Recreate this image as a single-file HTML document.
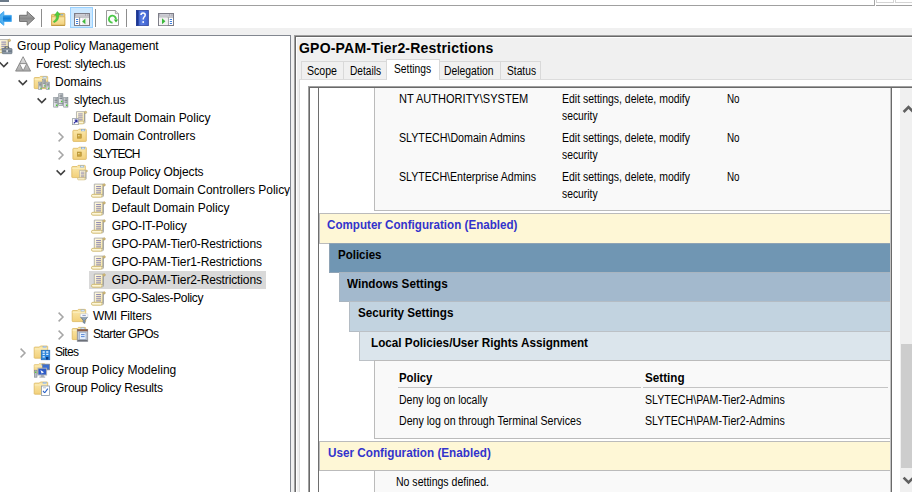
<!DOCTYPE html>
<html>
<head>
<meta charset="utf-8">
<title>Group Policy Management</title>
<style>
html,body{margin:0;padding:0;}
body{width:912px;height:492px;overflow:hidden;background:#fff;position:relative;font-family:"Liberation Sans",sans-serif;}
.a{position:absolute;}
.t{position:absolute;white-space:pre;line-height:1;transform-origin:0 0;font-family:"Liberation Sans",sans-serif;color:#000;}
svg{position:absolute;overflow:visible;}
</style>
</head>
<body>
<!-- top strip -->
<div class="a" style="left:0;top:0;width:9px;height:2px;background:#6b7a89"></div>
<div class="a" style="left:0;top:5px;width:875px;height:1px;background:#a0a0a0"></div>
<div class="a" style="left:876px;top:5px;width:36px;height:1px;background:#a0a0a0"></div>
<div class="a" style="left:874px;top:0;width:1px;height:6px;background:#a6a6a6"></div>
<div class="a" style="left:876px;top:0;width:18px;height:3px;border:1px solid #d4d4d4;border-top:none;box-sizing:border-box"></div>
<div class="a" style="left:895px;top:0;width:19px;height:3px;border:1px solid #d4d4d4;border-top:none;box-sizing:border-box"></div>
<!-- toolbar bottom strip -->
<div class="a" style="left:0;top:28px;width:912px;height:7px;background:#f0f0f0"></div>
<!-- left pane -->
<div class="a" style="left:0;top:35px;width:290px;height:460px;background:#fff;border-top:1px solid #828790;border-right:1px solid #828790"></div>
<!-- splitter gap -->
<div class="a" style="left:291px;top:35px;width:3px;height:460px;background:#f0f0f0"></div>
<!-- right pane -->
<div class="a" style="left:294px;top:35px;width:620px;height:460px;background:#f0f0f0;border-left:1px solid #a0a0a0;border-top:1px solid #a0a0a0;box-sizing:border-box"></div>
<div class="a" style="left:295px;top:36px;width:620px;height:460px;border-left:1px solid #696969;border-top:1px solid #696969;box-sizing:border-box"></div>
<div class="a" style="left:296px;top:37px;width:620px;height:460px;border-left:1px solid #fff;border-top:1px solid #fff;box-sizing:border-box"></div>

<!-- tab page -->
<div class="a" style="left:299px;top:79px;width:620px;height:420px;background:#fff;border-left:1px solid #dcdcdc;border-top:1px solid #dcdcdc;box-sizing:border-box"></div>
<!-- tabs -->
<div class="a" style="left:301px;top:61px;width:240px;height:18px;border:1px solid #d9d9d9;border-bottom:none;box-sizing:border-box;background:#f0f0f0"></div>
<div class="a" style="left:343px;top:61px;width:1px;height:18px;background:#d9d9d9"></div>
<div class="a" style="left:500px;top:61px;width:1px;height:18px;background:#d9d9d9"></div>
<div class="a" style="left:386px;top:59px;width:54px;height:21px;border:1px solid #d9d9d9;border-bottom:none;box-sizing:border-box;background:#fff"></div>

<!-- browser control (sunken border) -->
<div class="a" style="left:308px;top:86px;width:610px;height:410px;background:#fff;border-left:1px solid #a0a0a0;border-top:1px solid #a0a0a0;box-sizing:border-box"></div>
<div class="a" style="left:309px;top:87px;width:610px;height:410px;border-left:1px solid #696969;border-top:1px solid #696969;box-sizing:border-box"></div>

<!-- report container side borders -->
<div class="a" style="left:318px;top:88px;width:1px;height:410px;background:#6e6e6e"></div>
<div class="a" style="left:891px;top:88px;width:1px;height:410px;background:#6a6a6a"></div>
<div class="a" style="left:890px;top:88px;width:1px;height:410px;background:#c2c2c2;z-index:3"></div>

<!-- scrollbar -->
<div class="a" style="left:900px;top:88px;width:17px;height:410px;background:#f0f0f0"></div>
<div class="a" style="left:901px;top:344px;width:15px;height:124px;background:#cdcdcd"></div>
<svg style="left:900px;top:88px" width="17" height="404"><path d="M3.6 24 L8.5 19.1 L13.4 24" fill="none" stroke="#606060" stroke-width="2.6"/><path d="M3.6 389.6 L8.5 394.5 L13.4 389.6" fill="none" stroke="#606060" stroke-width="2.6"/></svg>

<!-- section 1 container (delegation table) -->
<div class="a" style="left:374px;top:88px;width:517px;height:123px;background:#f9f9f9;border-left:1px solid #bbb;border-bottom:1px solid #bbb;box-sizing:border-box"></div>

<!-- Computer Configuration -->
<div class="a" style="left:319px;top:213px;width:572px;height:31px;background:#fef7d6;border:1px solid #bbb;box-sizing:border-box"></div>
<div class="a" style="left:329px;top:243px;width:562px;height:30px;background:#7096b3;border:1px solid #8ea3b5;border-right-color:#bbb;box-sizing:border-box"></div>
<div class="a" style="left:339px;top:272px;width:552px;height:30px;background:#a3b9cd;border:1px solid #a9b5c0;border-right-color:#bbb;box-sizing:border-box"></div>
<div class="a" style="left:349px;top:301px;width:542px;height:31px;background:#c2d3e0;border:1px solid #b4bcc4;border-right-color:#bbb;box-sizing:border-box"></div>
<div class="a" style="left:359px;top:331px;width:532px;height:30px;background:#dbe5ec;border:1px solid #bcc1c6;border-right-color:#bbb;box-sizing:border-box"></div>
<!-- policy container -->
<div class="a" style="left:374px;top:360px;width:517px;height:79px;background:#f9f9f9;border:1px solid #bbb;box-sizing:border-box"></div>
<div class="a" style="left:398px;top:387px;width:243px;height:1px;background:#c4c4c4"></div>
<div class="a" style="left:643px;top:387px;width:245px;height:1px;background:#c4c4c4"></div>

<!-- User Configuration -->
<div class="a" style="left:319px;top:441px;width:572px;height:30px;background:#fef7d6;border:1px solid #bbb;box-sizing:border-box"></div>
<div class="a" style="left:374px;top:470px;width:517px;height:30px;background:#f9f9f9;border:1px solid #bbb;box-sizing:border-box"></div>

<!-- tree selection -->
<div class="a" style="left:89px;top:271px;width:177px;height:18px;background:#d9d9d9"></div>

<svg width="0" height="0" style="position:absolute">
<defs>
<linearGradient id="gPaper" x1="0" y1="0" x2="1" y2="1"><stop offset="0" stop-color="#fffbea"/><stop offset="1" stop-color="#f6e4a0"/></linearGradient>
<linearGradient id="gFold" x1="0" y1="0" x2="0" y2="1"><stop offset="0" stop-color="#fbe9ad"/><stop offset="1" stop-color="#f2d07a"/></linearGradient>
<linearGradient id="gGray" x1="0" y1="0" x2="0" y2="1"><stop offset="0" stop-color="#e8e8e8"/><stop offset="1" stop-color="#a8a8a8"/></linearGradient>
<linearGradient id="gSrv" x1="0" y1="0" x2="1" y2="0"><stop offset="0" stop-color="#eceef0"/><stop offset="1" stop-color="#b4bbc1"/></linearGradient>
<linearGradient id="gBlueArrow" x1="0" y1="0" x2="0" y2="1"><stop offset="0" stop-color="#6cc4f8"/><stop offset="0.5" stop-color="#0a7ad6"/><stop offset="1" stop-color="#58b8f4"/></linearGradient>
<linearGradient id="gGrayArrow" x1="0" y1="0" x2="0" y2="1"><stop offset="0" stop-color="#bdbdbd"/><stop offset="0.5" stop-color="#8a8a8a"/><stop offset="1" stop-color="#b5b5b5"/></linearGradient>
<linearGradient id="gHelp" x1="0" y1="0" x2="1" y2="0"><stop offset="0" stop-color="#3050b8"/><stop offset="0.45" stop-color="#5a7ee4"/><stop offset="1" stop-color="#3c5ecc"/></linearGradient>
<!-- GPO scroll 16x16 -->
<g id="scroll">
  <path d="M3.3 1.1 H12.1 V11.6 H3.3 Z" fill="url(#gPaper)" stroke="#a2a29e" stroke-width="0.8"/>
  <path d="M12.2 2.6 V13.2" stroke="#8e8e8e" stroke-width="0.9"/>
  <circle cx="13.1" cy="1.9" r="1.2" fill="#dcc680" stroke="#ac9660" stroke-width="0.6"/>
  <path d="M10.9 11.4 L12.4 11.6 L12.2 13.6 L10.6 14.2 Z" fill="#e8e6de" stroke="#9a9a96" stroke-width="0.5"/>
  <rect x="0.5" y="11.3" width="10.6" height="2.9" rx="1.4" fill="#fdf6d8" stroke="#cdb566" stroke-width="0.9"/>
  <path d="M5.1 3.6H10M5.1 5.7H10M5.1 7.8H10M5.1 9.9H10" stroke="#8884b2" stroke-width="1"/>
</g>
<!-- plain folder, 16x16 ; body x0.5-13, y1.5-13 -->
<g id="folder">
  <path d="M0.2 3.2 Q0.2 2.5 0.9 2.5 H5.4 L6.4 1.4 H13 Q13.7 1.4 13.7 2.1 V13 Q13.7 13.6 13.1 13.6 H0.8 Q0.2 13.6 0.2 13 Z" fill="url(#gFold)" stroke="#dcb860" stroke-width="0.8"/>
  <rect x="9" y="1.9" width="3.2" height="1.2" fill="#fff" stroke="#6a9ee0" stroke-width="0.5"/>
  <path d="M0.6 4.4 H13.3" stroke="#fdf0c4" stroke-width="0.8"/>
</g>
<!-- OU -->
<g id="ou">
  <path d="M0.9 3 Q0.9 2.3 1.6 2.3 H6 L7 1.2 H13.6 Q14.3 1.2 14.3 1.9 V12.8 Q14.3 13.4 13.7 13.4 H1.5 Q0.9 13.4 0.9 12.8 Z" fill="url(#gFold)" stroke="#dcb860" stroke-width="0.8"/>
  <rect x="9.6" y="1.7" width="3.2" height="1.2" fill="#fff" stroke="#6a9ee0" stroke-width="0.5"/>
  <rect x="5.3" y="6" width="4" height="4.2" fill="#c9a23c" stroke="#a8842c" stroke-width="0.5"/>
  <rect x="6" y="7.2" width="1.6" height="1" fill="#f6e6a8"/>
</g>
<!-- server tower w=4.4,h=10 at 0,0 -->
<g id="tower">
  <rect x="0.3" y="0.3" width="4.2" height="9.6" fill="url(#gSrv)" stroke="#7c858c" stroke-width="0.6"/>
  <path d="M1 1.8H3.8M1 3.4H3.8M1 5H3.8" stroke="#5a6268" stroke-width="0.7"/>
  <rect x="2.6" y="7.4" width="1.4" height="1.4" fill="#4ad12a"/>
</g>
<g id="chevD"><path d="M-4.2 -2.2 L0 2 L4.2 -2.2" fill="none" stroke="#404040" stroke-width="1.5"/></g>
<g id="chevR"><path d="M-2.4 -4.4 L2 0 L-2.4 4.4" fill="none" stroke="#a6a6a6" stroke-width="1.5"/></g>
</defs>
</svg>

<!-- ===== toolbar ===== -->
<svg style="left:0;top:0" width="200" height="30">
  <!-- back arrow (blue), cropped at left -->
  <path d="M-4.5 18.4 L3.8 11.6 V15.4 H11.3 V21.5 H3.8 V25.3 Z" fill="url(#gBlueArrow)" stroke="#4aaaf0" stroke-width="1" stroke-linejoin="round"/>
  <path d="M-3.2 18.4 L3 13.4 V23.4 Z" fill="#62bcf6" opacity="0.75"/>
  <!-- forward arrow (gray) -->
  <path d="M34.6 18.3 L27.2 11.6 V15.3 H19.5 V21.4 H27.2 V25.2 Z" fill="url(#gGrayArrow)" stroke="#707070" stroke-width="1" stroke-linejoin="round"/>
  <rect x="41" y="9" width="1" height="18" fill="#8d8d8d"/>
  <!-- up folder -->
  <path d="M51.5 15.2 Q51.5 14.4 52.3 14.4 H57.8 L58.8 13.4 H64 Q64.8 13.4 64.8 14.2 V25.3 H51.5 Z" fill="#f1cf7a" stroke="#d2aa50" stroke-width="0.9"/>
  <rect x="60.6" y="14.3" width="2.6" height="1" fill="#6aa4ee"/>
  <path d="M51.6 16.8 H64.7 V25.3 H51.6 Z" fill="url(#gFold)" stroke="#d2aa50" stroke-width="0.7"/>
  <path d="M51.4 25.4 H64.9" stroke="#b8923c" stroke-width="0.9"/>
  <path d="M53.4 21.4 Q56.8 20 56.6 15.2 L54.6 15.4 L57.4 11.5 L60.4 15 L58.6 15 Q59.2 20.8 54 22.6 Z" fill="#4fd03e" stroke="#34aa28" stroke-width="0.5"/>
  <!-- highlighted button -->
  <rect x="70.5" y="7.5" width="22" height="20" fill="#cce8ff" stroke="#99d1ff" stroke-width="1"/>
  <!-- show/hide tree icon -->
  <rect x="74.5" y="13.5" width="15" height="12" fill="#fff" stroke="#7e7e88" stroke-width="1"/>
  <rect x="75" y="14" width="14" height="2.2" fill="#a8a8b2"/>
  <rect x="75.6" y="14.5" width="9.6" height="0.9" fill="#f4f4f8"/><rect x="86" y="14.5" width="1" height="0.9" fill="#f4f4f8"/><rect x="87.6" y="14.5" width="1" height="0.9" fill="#f4f4f8"/>
  <rect x="75" y="16.6" width="14" height="0.9" fill="#8a8a94"/>
  <rect x="79.2" y="17.4" width="0.9" height="8" fill="#7e7e88"/>
  <rect x="82" y="18" width="6.6" height="7" fill="#f0f0f0"/>
  <path d="M76 19.5H78.2M76 21.5H78.2M76 23.5H78.2" stroke="#3f7fdc" stroke-width="1"/>
  <path d="M85.4 18.4 L82.2 21.4 L85.4 24.2 Z" fill="#3cba3c"/>
  <rect x="95" y="9" width="1" height="18" fill="#8d8d8d"/>
  <!-- refresh -->
  <path d="M106.5 10.5 H115.4 L118.5 13.6 V25.5 H106.5 Z" fill="#fdfdfd" stroke="#9a9a9a" stroke-width="1"/>
  <path d="M115.4 10.5 V13.6 H118.5" fill="#e4e4e4" stroke="#9a9a9a" stroke-width="0.8"/>
  <path d="M115.9 19.4 A3.5 3.5 0 1 0 112.6 22.6" fill="none" stroke="#4cc848" stroke-width="1.9"/>
  <path d="M113.8 19.4 H118.2 L116 22.6 Z" fill="#36b432"/>
  <rect x="126" y="9" width="1" height="18" fill="#8d8d8d"/>
  <!-- help -->
  <rect x="136.3" y="10.3" width="12.2" height="15.4" fill="url(#gHelp)" stroke="#1b2f8a" stroke-width="0.6"/>
  <rect x="136.4" y="10.4" width="2.2" height="15.2" fill="#1c3692"/>
  <path d="M141 15 Q141 13 143.1 13 Q145.2 13 145.2 15 Q145.2 16.4 144 17.2 Q143.2 17.9 143.2 19.6" fill="none" stroke="#fff" stroke-width="1.5"/>
  <rect x="142.4" y="21.2" width="1.6" height="1.7" fill="#fff"/>
  <!-- action pane icon -->
  <rect x="158.5" y="13.5" width="15" height="12" fill="#fff" stroke="#7e7e88" stroke-width="1"/>
  <rect x="159" y="14" width="14" height="2.2" fill="#a8a8b2"/>
  <rect x="159.6" y="14.5" width="9.6" height="0.9" fill="#f4f4f8"/><rect x="170" y="14.5" width="1" height="0.9" fill="#f4f4f8"/><rect x="171.6" y="14.5" width="1" height="0.9" fill="#f4f4f8"/>
  <rect x="159" y="16.6" width="14" height="0.9" fill="#8a8a94"/>
  <rect x="167.8" y="17.4" width="0.9" height="8" fill="#7e7e88"/>
  <rect x="159.4" y="17.6" width="8.2" height="7.6" fill="#f2f2f2"/>
  <path d="M169.8 19.5H172M169.8 21.5H172M169.8 23.5H172" stroke="#3f7fdc" stroke-width="1"/>
  <path d="M162 18.2 L165.4 21.2 L162 24.2 Z" fill="#3cba3c"/>
</svg>

<!-- ===== tree chevrons ===== -->
<svg style="left:0;top:0" width="290" height="492">
  <use href="#chevD" x="3.8" y="64.6"/>
  <use href="#chevD" x="22.8" y="82.6"/>
  <use href="#chevD" x="41.8" y="100.6"/>
  <use href="#chevR" x="61" y="137"/>
  <use href="#chevR" x="61" y="155"/>
  <use href="#chevD" x="60.8" y="172.6"/>
  <use href="#chevR" x="61" y="317"/>
  <use href="#chevR" x="61" y="335"/>
  <use href="#chevR" x="23" y="353"/>
</svg>

<!-- ===== tree icons ===== -->
<svg style="left:0;top:0" width="290" height="492">
  <!-- GPM root: scroll + briefcase (cropped at left) -->
  <use href="#scroll" x="-3.8" y="38.5"/>
  <g>
    <path d="M4.8 48.6 Q4.8 46.8 6.9 46.8 Q9 46.8 9 48.6" fill="none" stroke="#4e5862" stroke-width="1.1"/>
    <rect x="2.2" y="48.5" width="9.8" height="5.2" rx="0.7" fill="#8c98a6" stroke="#66727e" stroke-width="0.7"/>
    <rect x="2.5" y="50.6" width="9.2" height="1" fill="#5e6a76"/>
    <rect x="6.4" y="50" width="1.4" height="2.2" fill="#eef2f6"/>
  </g>
  <!-- Forest -->
  <g transform="translate(15,56)">
    <path d="M8.1 0.7 L15.6 15.1 H0.6 Z" fill="url(#gGray)" stroke="#858585" stroke-width="0.9" stroke-linejoin="round"/>
    <path d="M4.4 7.6 H11.8 L8.1 14.9 Z" fill="#fff" stroke="#858585" stroke-width="0.9" stroke-linejoin="round"/>
  </g>
  <!-- Domains: folder + towers -->
  <g transform="translate(34,75)">
    <use href="#folder"/>
    <g transform="translate(4.2,4.4) scale(0.8)"><use href="#tower" x="0" y="3"/><use href="#tower" x="9.6" y="3"/><use href="#tower" x="4.8" y="0"/></g>
  </g>
  <!-- slytech.us domain -->
  <g transform="translate(53,93)">
    <use href="#tower" x="0.4" y="4.2"/><use href="#tower" x="10.4" y="4.2"/><use href="#tower" x="5.4" y="0.4"/>
    <rect x="5.7" y="10.6" width="4.2" height="1.8" fill="url(#gSrv)" stroke="#7c858c" stroke-width="0.6"/>
  </g>
  <!-- Default Domain Policy link -->
  <g transform="translate(72,110.6)">
    <g transform="translate(1.4,0) scale(0.93)"><use href="#scroll"/></g>
    <rect x="0.5" y="8" width="6" height="6" fill="#fff" stroke="#9aa0a8" stroke-width="0.8"/>
    <path d="M1.8 12.8 L4.4 10.2 M2.6 9.6 H5 V12" fill="none" stroke="#2a2a9c" stroke-width="1.2"/>
  </g>
  <use href="#ou" x="72" y="128"/>
  <use href="#ou" x="72" y="146"/>
  <!-- GPO container: folder + small scroll -->
  <g transform="translate(71.6,164)">
    <use href="#folder"/>
    <g transform="translate(5.6,5.6) scale(0.72)"><use href="#scroll"/></g>
  </g>
  <use href="#scroll" x="91" y="183"/>
  <use href="#scroll" x="91" y="201"/>
  <use href="#scroll" x="91" y="219"/>
  <use href="#scroll" x="91" y="237"/>
  <use href="#scroll" x="91" y="255"/>
  <use href="#scroll" x="91" y="273"/>
  <use href="#scroll" x="91" y="291"/>
  <!-- WMI Filters -->
  <g transform="translate(72,308)">
    <use href="#folder"/>
    <path d="M8.6 9 H15.6 L13 12.4 V15.4 L11.2 14.6 V12.4 Z" fill="#8ea2b6" stroke="#5c6e80" stroke-width="0.7"/>
    <rect x="8.3" y="5.7" width="7.6" height="3.4" rx="0.9" fill="#fafbfd" stroke="#c4ccd6" stroke-width="0.6"/>
    <path d="M10.4 7.4H13.8" stroke="#8c9cc4" stroke-width="1"/>
  </g>
  <!-- Starter GPOs -->
  <g transform="translate(72,326)">
    <use href="#folder"/>
    <rect x="5.3" y="3.5" width="10.4" height="11.8" fill="#c4ccd8" stroke="#8a8e96" stroke-width="0.8"/>
    <rect x="5.3" y="3.3" width="10.4" height="2" fill="#8c5c46"/>
    <rect x="7.6" y="6.4" width="6.4" height="7" fill="#e6f0fc" stroke="#90a4c4" stroke-width="0.6"/>
    <path d="M9 8.6H12.6M9 10.6H12.6" stroke="#4a7cd0" stroke-width="0.9"/>
    <rect x="5.6" y="13.8" width="9.8" height="1.4" fill="#6c7078"/>
  </g>
  <!-- Sites -->
  <g transform="translate(34,344.6)">
    <use href="#folder"/>
    <rect x="7.2" y="5.6" width="8.6" height="9.6" fill="#2d86dc" stroke="#1a62b4" stroke-width="0.6"/>
    <path d="M8.6 7.4H10.8M12.2 7.4H14.4M8.6 9.8H10.8M12.2 9.8H14.4M8.6 12.2H10.8" stroke="#e4f2ff" stroke-width="1.3"/>
    <rect x="12" y="12.4" width="2.4" height="2.6" fill="#0c3c84"/>
  </g>
  <!-- Group Policy Modeling -->
  <g transform="translate(34,362.6)">
    <g transform="scale(0.8)"><use href="#folder"/></g>
    <rect x="8.4" y="1.6" width="7" height="5.6" fill="#3a6ed0" stroke="#7a8290" stroke-width="0.8"/>
    <rect x="4" y="5.6" width="8.6" height="6.8" fill="#2f5cc8" stroke="#aab0ba" stroke-width="1"/>
    <path d="M6.4 7.4 L10 9.6 L7.6 11" fill="#fff"/>
    <rect x="6.8" y="12.8" width="3" height="1.2" fill="#8a9098"/><rect x="5.4" y="14" width="5.8" height="0.9" fill="#8a9098"/>
    <rect x="0.4" y="7.6" width="2.6" height="7" fill="#b8bec6" stroke="#7a8290" stroke-width="0.6"/>
    <rect x="1" y="9" width="1.3" height="1.3" fill="#4ad12a"/>
  </g>
  <!-- Group Policy Results -->
  <g transform="translate(34,380.6)">
    <use href="#folder"/>
    <rect x="7.4" y="5.4" width="8" height="9.4" fill="#fff" stroke="#8a98a8" stroke-width="0.8"/>
    <path d="M9 10.4 L10.8 12.2 M10.8 12.2 L13.8 8" fill="none" stroke="#2a62c8" stroke-width="1.1"/>
    <path d="M9 7.2H12" stroke="#9aa8b8" stroke-width="0.7"/>
  </g>
</svg>

<span class="t" style="left:17.1px;top:39.84px;font-size:12px;letter-spacing:-0.025px;">Group Policy Management</span>
<span class="t" style="left:36.1px;top:57.84px;font-size:12px;letter-spacing:-0.268px;">Forest: slytech.us</span>
<span class="t" style="left:55.1px;top:75.84px;font-size:12px;letter-spacing:-0.123px;">Domains</span>
<span class="t" style="left:74.0px;top:93.84px;font-size:12px;letter-spacing:-0.216px;">slytech.us</span>
<span class="t" style="left:93.0px;top:111.84px;font-size:12px;letter-spacing:-0.027px;">Default Domain Policy</span>
<span class="t" style="left:93.0px;top:129.84px;font-size:12px;letter-spacing:-0.011px;">Domain Controllers</span>
<span class="t" style="left:93.0px;top:147.84px;font-size:12px;letter-spacing:-1.153px;">SLYTECH</span>
<span class="t" style="left:93.0px;top:165.84px;font-size:12px;letter-spacing:-0.111px;">Group Policy Objects</span>
<span class="t" style="left:111.8px;top:183.84px;font-size:12px;letter-spacing:-0.034px;width:177.8px;overflow:hidden;">Default Domain Controllers Policy</span>
<span class="t" style="left:111.8px;top:201.84px;font-size:12px;letter-spacing:-0.013px;">Default Domain Policy</span>
<span class="t" style="left:111.8px;top:219.84px;font-size:12px;letter-spacing:-0.145px;">GPO-IT-Policy</span>
<span class="t" style="left:111.8px;top:237.84px;font-size:12px;letter-spacing:-0.129px;">GPO-PAM-Tier0-Restrictions</span>
<span class="t" style="left:111.8px;top:255.84px;font-size:12px;letter-spacing:-0.129px;">GPO-PAM-Tier1-Restrictions</span>
<span class="t" style="left:111.8px;top:273.84px;font-size:12px;letter-spacing:-0.129px;">GPO-PAM-Tier2-Restrictions</span>
<span class="t" style="left:111.8px;top:291.84px;font-size:12px;letter-spacing:-0.331px;">GPO-Sales-Policy</span>
<span class="t" style="left:92.9px;top:309.84px;font-size:12px;letter-spacing:-0.178px;">WMI Filters</span>
<span class="t" style="left:92.9px;top:327.84px;font-size:12px;letter-spacing:-0.528px;">Starter GPOs</span>
<span class="t" style="left:55.0px;top:345.84px;font-size:12px;letter-spacing:-0.658px;">Sites</span>
<span class="t" style="left:55.0px;top:363.84px;font-size:12px;letter-spacing:0.027px;">Group Policy Modeling</span>
<span class="t" style="left:55.0px;top:381.84px;font-size:12px;letter-spacing:-0.217px;">Group Policy Results</span>
<span class="t" style="left:299.0px;top:41.15px;font-size:14px;font-weight:700;letter-spacing:0.204px;">GPO-PAM-Tier2-Restrictions</span>
<span class="t" style="left:306.7px;top:65.42px;font-size:12.5px;transform:scaleX(0.8462);">Scope</span>
<span class="t" style="left:349.6px;top:65.42px;font-size:12.5px;transform:scaleX(0.8111);">Details</span>
<span class="t" style="left:393.6px;top:63.42px;font-size:12.5px;transform:scaleX(0.8213);">Settings</span>
<span class="t" style="left:443.9px;top:65.42px;font-size:12.5px;transform:scaleX(0.8282);">Delegation</span>
<span class="t" style="left:506.7px;top:65.42px;font-size:12.5px;transform:scaleX(0.8183);">Status</span>
<span class="t" style="left:398.7px;top:93.42px;font-size:12.5px;transform:scaleX(0.8829);">NT AUTHORITY\SYSTEM</span>
<span class="t" style="left:562.1px;top:93.42px;font-size:12.5px;transform:scaleX(0.8374);">Edit settings, delete, modify</span>
<span class="t" style="left:562.1px;top:110.42px;font-size:12.5px;transform:scaleX(0.8264);">security</span>
<span class="t" style="left:727.0px;top:93.42px;font-size:12.5px;transform:scaleX(0.7883);">No</span>
<span class="t" style="left:398.7px;top:132.42px;font-size:12.5px;transform:scaleX(0.8535);">SLYTECH\Domain Admins</span>
<span class="t" style="left:562.1px;top:132.42px;font-size:12.5px;transform:scaleX(0.8374);">Edit settings, delete, modify</span>
<span class="t" style="left:562.1px;top:149.42px;font-size:12.5px;transform:scaleX(0.8264);">security</span>
<span class="t" style="left:727.0px;top:132.42px;font-size:12.5px;transform:scaleX(0.7883);">No</span>
<span class="t" style="left:398.7px;top:171.42px;font-size:12.5px;transform:scaleX(0.8476);">SLYTECH\Enterprise Admins</span>
<span class="t" style="left:562.1px;top:171.42px;font-size:12.5px;transform:scaleX(0.8374);">Edit settings, delete, modify</span>
<span class="t" style="left:562.1px;top:188.42px;font-size:12.5px;transform:scaleX(0.8264);">security</span>
<span class="t" style="left:727.0px;top:171.42px;font-size:12.5px;transform:scaleX(0.7883);">No</span>
<span class="t" style="left:327.4px;top:219.42px;font-size:12.5px;font-weight:700;color:#3333cc;transform:scaleX(0.9299);">Computer Configuration (Enabled)</span>
<span class="t" style="left:337.7px;top:249.42px;font-size:12.5px;font-weight:700;transform:scaleX(0.9206);">Policies</span>
<span class="t" style="left:347.2px;top:278.42px;font-size:12.5px;font-weight:700;transform:scaleX(0.9374);">Windows Settings</span>
<span class="t" style="left:357.7px;top:307.42px;font-size:12.5px;font-weight:700;transform:scaleX(0.9341);">Security Settings</span>
<span class="t" style="left:371.0px;top:337.42px;font-size:12.5px;font-weight:700;transform:scaleX(0.9372);">Local Policies/User Rights Assignment</span>
<span class="t" style="left:398.7px;top:372.42px;font-size:12.5px;font-weight:700;transform:scaleX(0.9069);">Policy</span>
<span class="t" style="left:644.9px;top:372.42px;font-size:12.5px;font-weight:700;transform:scaleX(0.9325);">Setting</span>
<span class="t" style="left:398.7px;top:394.42px;font-size:12.5px;transform:scaleX(0.8425);">Deny log on locally</span>
<span class="t" style="left:398.7px;top:415.42px;font-size:12.5px;transform:scaleX(0.8495);">Deny log on through Terminal Services</span>
<span class="t" style="left:644.9px;top:394.42px;font-size:12.5px;transform:scaleX(0.8498);">SLYTECH\PAM-Tier2-Admins</span>
<span class="t" style="left:644.9px;top:415.42px;font-size:12.5px;transform:scaleX(0.8498);">SLYTECH\PAM-Tier2-Admins</span>
<span class="t" style="left:328.1px;top:447.42px;font-size:12.5px;font-weight:700;color:#3333cc;transform:scaleX(0.9377);">User Configuration (Enabled)</span>
<span class="t" style="left:395.8px;top:476.42px;font-size:12.5px;transform:scaleX(0.8416);">No settings defined.</span>
</body>
</html>
